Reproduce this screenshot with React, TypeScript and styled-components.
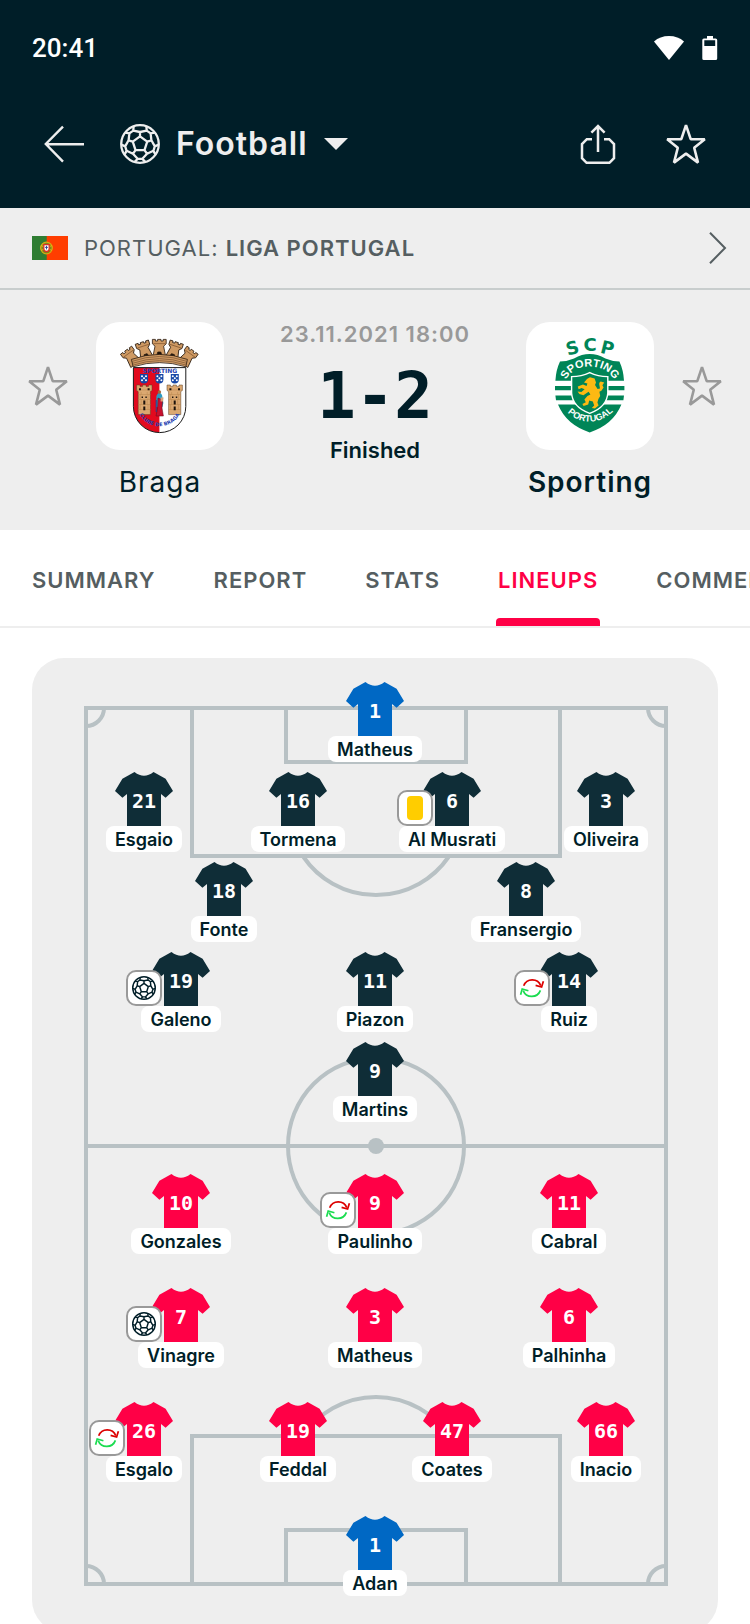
import React from "react";
import styled, { createGlobalStyle } from "styled-components";

const color = {
  navy: "#001e28",
  shirtHome: "#0f2d37",
  shirtAway: "#ff0046",
  shirtKeeper: "#0068c4",
  grey: "#eeeeee",
  line: "#b8c1c4",
  slate: "#555e61",
  muted: "#999999",
  accent: "#ff0046",
};

const GlobalStyle = createGlobalStyle`
  *, *::before, *::after { box-sizing: border-box; }
  body {
    margin: 0;
    background: #ffffff;
    color: ${color.navy};
    font-family: Inter, "Liberation Sans", sans-serif;
  }
  button, select {
    font: inherit;
    color: inherit;
    background: none;
    border: 0;
    padding: 0;
    margin: 0;
    cursor: pointer;
  }
  a { color: inherit; text-decoration: none; }
  svg { display: block; flex: none; }
`;

/* ---------- Shell ---------- */

const Screen = styled.div`
  display: flex;
  flex-direction: column;
  height: 100vh;
  overflow: hidden auto;
  scrollbar-width: none;
`;

const Header = styled.header`
  flex: none;
  padding-bottom: 16px;
  background: ${color.navy};
  color: ${color.grey};
`;

const StatusBar = styled.div`
  display: flex;
  align-items: center;
  gap: 18px;
  height: 96px;
  padding: 0 32px;
  color: #ffffff;
`;

const Clock = styled.time`
  margin-right: auto;
  font: 500 26px/32px Roboto, sans-serif;
`;

const NavBar = styled.div`
  display: flex;
  align-items: center;
  height: 96px;
  padding: 0 44px;
`;

const IconButton = styled.button<{ $tone?: string }>`
  flex: none;
  width: 40px;
  height: 40px;
  color: ${(p) => p.$tone ?? "inherit"};
`;

const SportPicker = styled.label`
  display: flex;
  align-items: center;
  gap: 16px;
  margin: 0 auto 0 36px;
`;

const SportSelect = styled.select`
  appearance: none;
  font-size: 32px;
  font-weight: 600;
  line-height: 40px;
  letter-spacing: 1px;
`;

const NavActions = styled.div`
  display: flex;
  gap: 48px;
`;

/* ---------- League and score ---------- */

const LeagueLink = styled.a`
  display: flex;
  flex: none;
  align-items: center;
  gap: 16px;
  height: 82px;
  padding: 0 22px 0 32px;
  border-bottom: 2px solid #c8cdcd;
  background: ${color.grey};
  color: ${color.slate};
  font-size: 22px;
  line-height: 28px;
  letter-spacing: 1px;
`;

const LeagueName = styled.span`
  flex: 1;
  strong { font-weight: 600; }
`;

const MatchHeader = styled.section`
  display: flex;
  flex: none;
  align-items: flex-start;
  gap: 28px;
  padding: 32px 28px 28px;
  background: ${color.grey};
`;

const FavouriteSlot = styled.div`
  display: flex;
  align-items: center;
  height: 128px;
`;

const Team = styled.div`
  display: flex;
  flex-direction: column;
  align-items: center;
  gap: 12px;
  width: 128px;
`;

const CrestTile = styled.div`
  width: 128px;
  height: 128px;
  border-radius: 24px;
  background: #ffffff;
`;

const TeamName = styled.span<{ $winner?: boolean }>`
  font-size: 28px;
  font-weight: ${(p) => (p.$winner ? 600 : 400)};
  line-height: 40px;
  letter-spacing: 1px;
`;

const ScoreBlock = styled.div`
  display: flex;
  flex: 1;
  flex-direction: column;
  align-items: center;
  white-space: nowrap;
`;

const Kickoff = styled.time`
  color: ${color.muted};
  font-size: 22px;
  font-weight: 600;
  line-height: 24px;
  letter-spacing: 1px;
`;

const Score = styled.strong`
  margin: 18px 0 10px;
  font: 700 64px/64px "DejaVu Sans Mono", monospace;
`;

const MatchState = styled.span`
  font-size: 22px;
  font-weight: 600;
  line-height: 24px;
`;

/* ---------- Tabs ---------- */

const Tabs = styled.nav`
  display: flex;
  flex: none;
  gap: 54px;
  overflow: hidden;
  padding: 0 30px;
  border-bottom: 2px solid ${color.grey};
`;

const Tab = styled.a<{ $active?: boolean }>`
  color: ${(p) => (p.$active ? color.accent : color.slate)};
  font-size: 22px;
  font-weight: 600;
  line-height: 28px;
  letter-spacing: 1px;
  padding: 36px 2px 0;

  &::after {
    content: "";
    display: block;
    height: 8px;
    margin: 24px -2px 0;
    border-radius: 4px 4px 0 0;
    background: ${(p) => (p.$active ? color.accent : "transparent")};
  }
`;

/* ---------- Pitch ---------- */

const PitchCard = styled.section`
  position: relative;
  flex: none;
  margin: 30px 32px 32px;
  padding: 24px 35px 36px;
  border-radius: 32px;
  background: ${color.grey};
`;

const PitchLines = styled.svg`
  position: absolute;
  top: 48px;
  left: 52px;
  width: calc(100% - 102px);
  height: calc(100% - 94px);
`;

const Formation = styled.div<{ $gap: number }>`
  position: relative;
  display: flex;
  flex-direction: column;
  gap: ${(p) => p.$gap}px;

  & + & { margin-top: 52px; }
`;

const rowInset: Record<number, number> = { 2: 6, 3: 17 };

const PlayerRow = styled.div<{ $count: number }>`
  display: grid;
  grid-template-columns: repeat(${(p) => p.$count}, 1fr);
  justify-items: center;
  padding: 0 ${(p) => rowInset[p.$count] ?? 0}px;
`;

const PlayerLink = styled.a`
  display: flex;
  flex-direction: column;
  align-items: center;
`;

const Shirt = styled.span`
  position: relative;
  display: grid;
  width: 58px;
  height: 54px;

  > * { grid-area: 1 / 1; }
`;

const ShirtNumber = styled.span`
  z-index: 1;
  align-self: center;
  justify-self: center;
  padding-top: 4px;
  color: #ffffff;
  font: 700 20px/24px "DejaVu Sans Mono", monospace;
`;

const Badge = styled.span`
  position: absolute;
  z-index: 2;
  top: 18px;
  left: -26px;
  display: grid;
  place-items: center;
  width: 36px;
  height: 36px;
  border: 2px solid ${color.muted};
  border-radius: 10px;
  background: #ffffff;
  color: ${color.navy};
`;

const YellowCard = styled.span`
  width: 16px;
  height: 24px;
  border-radius: 4px;
  background: #ffcd00;
`;

const PlayerName = styled.span`
  padding: 2px 9px 0;
  border-radius: 8px;
  background: #ffffff;
  font-size: 18px;
  font-weight: 600;
  line-height: 24px;
  white-space: nowrap;
`;

/* ---------- Icons ---------- */

const point = (r: number, deg: number) => {
  const a = ((deg - 90) * Math.PI) / 180;
  return `${(20 + r * Math.cos(a)).toFixed(2)} ${(20 + r * Math.sin(a)).toFixed(2)}`;
};

const ballSeams = [0, 72, 144, 216, 288]
  .map(
    (t) =>
      `M${point(7.6, t)}L${point(7.6, t + 72)}` +
      `M${point(7.6, t)}L${point(12, t)}` +
      `M${point(18.6, t - 20)}L${point(15, t - 27)}L${point(12, t)}L${point(15, t + 27)}L${point(18.6, t + 20)}` +
      `M${point(15, t + 27)}L${point(15, t + 45)}`
  )
  .join("");

const BallIcon = ({ size, stroke }: { size: number; stroke: number }) => (
  <svg width={size} height={size} viewBox="0 0 40 40" fill="none" stroke="currentColor" strokeWidth={stroke} strokeLinejoin="round">
    <circle cx="20" cy="20" r="18.8" />
    <path d={ballSeams} />
  </svg>
);

const BackIcon = () => (
  <svg width="40" height="40" viewBox="0 0 40 40" fill="none" stroke="currentColor" strokeWidth="2.4">
    <path d="M19 2.6 1.8 20 19 37.6M1.8 20.3H40" />
  </svg>
);

const ShareIcon = () => (
  <svg width="40" height="40" viewBox="0 0 40 40" fill="none" stroke="currentColor" strokeWidth="2.5">
    <path d="M14 15.2H8.8L4 20v14.2l4.6 4.6h22.8l4.6-4.6V20l-4.8-4.8H26" />
    <path d="M20 28V2.2M13.4 8.6 20 2l6.6 6.6" />
  </svg>
);

const StarIcon = () => (
  <svg width="40" height="40" viewBox="0 0 40 40" fill="none" stroke="currentColor" strokeWidth="2.6" strokeLinejoin="bevel">
    <path d="M20 1.2 24.7 15.2H38.8L28.2 23.8 32 38.6 20 29.6 8 38.6 11.8 23.8 1.2 15.2H15.3Z" />
  </svg>
);

const CaretIcon = () => (
  <svg width="24" height="12" viewBox="0 0 24 12" fill="currentColor">
    <path d="M0 0H24L12 12Z" />
  </svg>
);

const ChevronIcon = () => (
  <svg width="20" height="32" viewBox="0 0 20 32" fill="none" stroke="currentColor" strokeWidth="2">
    <path d="M2 .8 17 16 2 31.2" />
  </svg>
);

const WifiIcon = () => (
  <svg width="30" height="24" viewBox="0 0 30 24" fill="currentColor">
    <path d="M15 24 0 5.4C4 2 9 0 15 0s11 2 15 5.4Z" />
  </svg>
);

const BatteryIcon = () => (
  <svg width="16" height="24" viewBox="0 0 16 24" fill="currentColor">
    <path fillRule="evenodd" d="M5 0h6v2.4h2.6a1.6 1.6 0 0 1 1.6 1.6v18.4a1.6 1.6 0 0 1-1.6 1.6H1.9A1.6 1.6 0 0 1 .3 22.4V4a1.6 1.6 0 0 1 1.6-1.6H5ZM2.3 4.2V10h10.9V4.2Z" />
  </svg>
);

const SwapIcon = () => (
  <svg width="32" height="32" viewBox="2 2 32 32" fill="none" strokeWidth="1.7">
    <g stroke="#dc0000">
      <path d="M9.7 15.8A9.2 9.2 0 0 1 26.8 15.6" />
      <path d="M21.6 15.4 27.6 17 29.4 11.2" />
    </g>
    <g stroke="#1bdc50">
      <path d="M26.4 20.4A9.2 9.2 0 0 1 9.2 20.6" />
      <path d="M14.4 20.8 8.2 19 6.6 24.8" />
    </g>
  </svg>
);

const ShirtShape = ({ fill }: { fill: string }) => (
  <svg width="58" height="54" viewBox="0 0 58 54" fill={fill}>
    <path d="M19.5 0Q29 7.6 38.5 0L50.6 6.8 58 19 50.6 25.8 46 22V54H12V22L7.4 25.8 0 19 7.4 6.8Z" />
  </svg>
);

const PortugalFlag = () => (
  <svg width="36" height="24" viewBox="0 0 36 24" role="img" aria-label="Portugal">
    <path fill="#ff3d00" d="M0 0H36V24H0Z" />
    <path fill="#2f7d32" d="M0 0H14.7V24H0Z" />
    <circle cx="14.5" cy="12" r="5.8" fill="#7a8a1a" stroke="#d9a813" strokeWidth="1.3" />
    <path d="M9 9.5 20 14.5M9 14.5 20 9.5" stroke="#e8bd18" strokeWidth=".8" />
    <path fill="#ffffff" stroke="#dc3226" strokeWidth="1.3" d="M11.8 8.6h5.4v4.2a2.7 2.7 0 0 1-5.4 0Z" />
    <path d="M14.5 9.8v3.6M13.1 11.4h2.8" stroke="#24408e" strokeWidth=".9" />
  </svg>
);

/* ---------- Crests ---------- */

const CrownTower = ({ angle }: { angle: number }) => (
  <g transform={`rotate(${angle} 63.3 74)`} stroke="#2b1c10" strokeWidth=".8">
    <path fill="#cf9a63" d="M56.4 17.4h3v1.6h2.2v-1.6h3.4v1.6h2.2v-1.6h3v4.4l-2.6 2.4 2 10H57l2-10-2.6-2.4Z" />
    <path d="M57.4 21.6h12" stroke="#8a5c33" />
    <path fill="#1c120b" d="M60.4 34.4l1.4-4.4h3l1.4 4.4Z" />
  </g>
);

const CastleTower = ({ x }: { x: number }) => (
  <g transform={`translate(${x} 63)`}>
    <path fill="#dba871" stroke="#5b3c22" strokeWidth=".5" d="M0 0h3.4v1.4H6V0h3.4v1.4H12V0h3.4v5.4l-1.6 1.2V29.6H1.6V6.6L0 5.4Z" />
    <path stroke="#b8864f" strokeWidth=".5" d="M0 5H15.4M1.6 9.5H13.8M1.6 14.5H13.8M1.6 19.5H13.8M1.6 24.5H13.8M4.6 7v2.5M10.6 7v2.5M3.6 9.5v5M11.4 9.5v5M4.6 14.5v5M10.6 14.5v5M3.6 19.5v5M11.4 19.5v5" />
    <path fill="#1c120b" d="M6.7 15.4h2v4h-2ZM6.7 21.4h2V25.2h-2ZM5 11.6h1.4v1.5H5ZM8.8 11.6h1.4v1.5H8.8ZM2.4 3.2h2v2h-2ZM11 3.2h2v2h-2Z" />
  </g>
);

const Quina = ({ x }: { x: number }) => (
  <g transform={`translate(${x} 52)`}>
    <path fill="#1747a6" d="M-4 0H4V5.4A4 4 0 0 1-4 5.4Z" />
    <g fill="#ffffff">
      <circle cx="-2" cy="2.2" r="1" />
      <circle cx="2" cy="2.2" r="1" />
      <circle cx="0" cy="4.3" r="1" />
      <circle cx="-2" cy="6.2" r="1" />
      <circle cx="2" cy="6.2" r="1" />
    </g>
  </g>
);

const BragaCrest = () => (
  <svg width="128" height="128" viewBox="0 0 128 128" role="img" aria-label="Braga crest">
    {[-36, 36, -18, 18, 0].map((a) => (
      <CrownTower key={a} angle={a} />
    ))}
    <path fill="#cf9a63" stroke="#2b1c10" strokeWidth=".8" d="M35.4 37.4Q63.3 27.4 91.4 37.4L89.8 44.8Q63.3 36.4 37.2 44.8Z" />
    <path fill="none" stroke="#7a5230" strokeWidth=".7" d="M36 39.4Q63.3 29.6 90.8 39.4M36.6 41.3Q63.3 32 90.4 41.3M37 43.1Q63.3 34.2 90.2 43.1" />
    <path fill="#ffffff" d="M37.4 45.6H89.8V84.4A26.2 26.2 0 0 1 37.4 84.4Z" />
    <path fill="#e20a1e" d="M37.4 45.6H63.4V110.6A26.2 26.2 0 0 1 37.4 84.4Z" />
    <path fill="none" stroke="#1c1c1c" strokeWidth="1" d="M37.4 45.6H89.8V84.4A26.2 26.2 0 0 1 37.4 84.4Z" />
    <text x="64" y="51" textAnchor="middle" fill="#2440b0" fontFamily="DejaVu Sans" fontWeight="700" fontSize="6">
      SPORTING
    </text>
    <Quina x={48} />
    <Quina x={63.4} />
    <Quina x={78.8} />
    <CastleTower x={40.6} />
    <CastleTower x={71} />
    <path fill="#2a9bc4" d="M60.4 74q2.6-6 5.6-1l1.4 8-1 4H60Z" />
    <path fill="#c8102e" stroke="#5c0a18" strokeWidth=".5" d="M62 76 66.6 78 66 86 67.4 94H60L61.6 86Z" />
    <path fill="#d8a27a" d="M64.6 75.4h3l-.6 4h-2.4Z" />
    <circle cx="63.4" cy="70" r="1.7" fill="#a5673a" />
    <path stroke="#24408e" strokeWidth="1" d="M60.2 78V90" />
    <path id="braga-motto" fill="none" d="M41.6 88A23 23 0 0 0 85.6 88" />
    <text fill="#2440b0" fontFamily="DejaVu Sans" fontWeight="700" fontSize="5">
      <textPath href="#braga-motto" startOffset="50%" textAnchor="middle">
        CLUBE DE BRAGA
      </textPath>
    </text>
  </svg>
);

const SportingCrest = () => (
  <svg width="128" height="128" viewBox="0 0 128 128" role="img" aria-label="Sporting crest">
    <g fill="#008557" fontFamily="DejaVu Sans" fontWeight="700" fontSize="18" textAnchor="middle">
      <text transform="translate(48 32) rotate(-15)">S</text>
      <text transform="translate(64 29)">C</text>
      <text transform="translate(80 32) rotate(14)">P</text>
    </g>
    <path fill="#008557" d="M34 39.6Q42 39 48 36.4 63.7 27.6 79.4 36.4 85.4 39 93.4 39.6 97.4 48 98 58.8H29.4Q30 48 34 39.6Z" />
    <path fill="#008557" d="M29 64H98.4V68.2H29ZM29.4 73.6H98L97.4 78.2H30ZM32 82.6H95.4Q87 103 63.7 110.4 40.4 103 32 82.6Z" />
    <path fill="#008557" stroke="#ffffff" strokeWidth="1.4" d="M45.6 54.6Q55.6 54.6 63.7 50.6 71.8 54.6 81.8 54.6V71Q81 85 63.7 91.4 46.4 85 45.6 71Z" />
    <path
      fill="#fdb913"
      d="M61 57 64 55.2 68.6 56.4 70 60.4 69 63 71.6 67 74 66.4 73.4 63.2Q72.6 60.4 74.8 59.4L78.2 60.6 76.4 63.2 77.6 65.6 75.4 68.8 73.4 69.8 74.2 74 72.4 77 71.4 80.4 72.6 83.4 69 86.4 65.8 86 68.2 83.4 66.8 79.6 63.2 78.6 62.2 82.4 57.6 84 56.4 82 59.8 80.2 58.4 77.6 61.4 74 64.4 72.6 62.6 69.8 57.4 73.2 53.4 72 51.6 69.4 55.4 70 58.6 67.2 55.6 66 52.6 67.2 51.8 64.4 57 62.6 60.6 64 61.4 61.6 58 60.4Z"
    />
    <path id="sporting-arc" fill="none" d="M39.6 58.6Q46 45 63.7 44.4 81.6 45 88.6 58.6" />
    <path id="portugal-arc" fill="none" d="M38.4 87Q49 99.6 63.7 99.6 78.4 99.6 90.4 86" />
    <g fill="#ffffff" fontFamily="Liberation Sans" fontWeight="700">
      <text fontSize="11">
        <textPath href="#sporting-arc" startOffset="50%" textAnchor="middle">
          SPORTING
        </textPath>
      </text>
      <text fontSize="9">
        <textPath href="#portugal-arc" startOffset="50%" textAnchor="middle">
          PORTUGAL
        </textPath>
      </text>
    </g>
  </svg>
);

/* ---------- Data ---------- */

type Event = "goal" | "yellow" | "swap";
type Player = { no: number; name: string; event?: Event };

const home: Player[][] = [
  [{ no: 1, name: "Matheus" }],
  [
    { no: 21, name: "Esgaio" },
    { no: 16, name: "Tormena" },
    { no: 6, name: "Al Musrati", event: "yellow" },
    { no: 3, name: "Oliveira" },
  ],
  [
    { no: 18, name: "Fonte" },
    { no: 8, name: "Fransergio" },
  ],
  [
    { no: 19, name: "Galeno", event: "goal" },
    { no: 11, name: "Piazon" },
    { no: 14, name: "Ruiz", event: "swap" },
  ],
  [{ no: 9, name: "Martins" }],
];

const away: Player[][] = [
  [
    { no: 10, name: "Gonzales" },
    { no: 9, name: "Paulinho", event: "swap" },
    { no: 11, name: "Cabral" },
  ],
  [
    { no: 7, name: "Vinagre", event: "goal" },
    { no: 3, name: "Matheus" },
    { no: 6, name: "Palhinha" },
  ],
  [
    { no: 26, name: "Esgalo", event: "swap" },
    { no: 19, name: "Feddal" },
    { no: 47, name: "Coates" },
    { no: 66, name: "Inacio" },
  ],
  [{ no: 1, name: "Adan" }],
];

const tabs = ["SUMMARY", "REPORT", "STATS", "LINEUPS", "COMMENTARY"];

const eventMark: Record<Event, React.ReactNode> = {
  goal: <BallIcon size={24} stroke={2.4} />,
  yellow: <YellowCard />,
  swap: <SwapIcon />,
};

const Lines = ({ rows, shirt, gap }: { rows: Player[][]; shirt: string; gap: number }) => (
  <Formation $gap={gap}>
    {rows.map((row, i) => (
      <PlayerRow key={i} $count={row.length}>
        {row.map((p) => (
          <PlayerLink key={p.name} href="#player">
            <Shirt>
              <ShirtShape fill={p.no === 1 ? color.shirtKeeper : shirt} />
              <ShirtNumber>{p.no}</ShirtNumber>
              {p.event && <Badge>{eventMark[p.event]}</Badge>}
            </Shirt>
            <PlayerName>{p.name}</PlayerName>
          </PlayerLink>
        ))}
      </PlayerRow>
    ))}
  </Formation>
);

export default function App() {
  return (
    <Screen>
      <GlobalStyle />
      <Header>
        <StatusBar>
          <Clock>20:41</Clock>
          <WifiIcon />
          <BatteryIcon />
        </StatusBar>
        <NavBar>
          <IconButton aria-label="Back">
            <BackIcon />
          </IconButton>
          <SportPicker>
            <BallIcon size={40} stroke={2.3} />
            <SportSelect aria-label="Sport" defaultValue="Football">
              <option>Football</option>
            </SportSelect>
            <CaretIcon />
          </SportPicker>
          <NavActions>
            <IconButton aria-label="Share">
              <ShareIcon />
            </IconButton>
            <IconButton aria-label="Add match to favourites">
              <StarIcon />
            </IconButton>
          </NavActions>
        </NavBar>
      </Header>

      <LeagueLink href="#league">
        <PortugalFlag />
        <LeagueName>
          PORTUGAL: <strong>LIGA PORTUGAL</strong>
        </LeagueName>
        <ChevronIcon />
      </LeagueLink>

      <MatchHeader>
        <FavouriteSlot>
          <IconButton $tone={color.muted} aria-label="Add Braga to favourites">
            <StarIcon />
          </IconButton>
        </FavouriteSlot>
        <Team>
          <CrestTile>
            <BragaCrest />
          </CrestTile>
          <TeamName>Braga</TeamName>
        </Team>
        <ScoreBlock>
          <Kickoff>23.11.2021 18:00</Kickoff>
          <Score>1-2</Score>
          <MatchState>Finished</MatchState>
        </ScoreBlock>
        <Team>
          <CrestTile>
            <SportingCrest />
          </CrestTile>
          <TeamName $winner>Sporting</TeamName>
        </Team>
        <FavouriteSlot>
          <IconButton $tone={color.muted} aria-label="Add Sporting to favourites">
            <StarIcon />
          </IconButton>
        </FavouriteSlot>
      </MatchHeader>

      <Tabs>
        {tabs.map((t) => (
          <Tab key={t} href={`#${t.toLowerCase()}`} $active={t === "LINEUPS"}>
            {t}
          </Tab>
        ))}
      </Tabs>

      <PitchCard>
        <PitchLines viewBox="0 0 584 880" preserveAspectRatio="none" fill="none" stroke={color.line} strokeWidth="4">
          <path d="M2 2H582V878H2ZM2 440H582" />
          <path d="M108 2V150H476V2M202 2V56H382V2" />
          <path d="M108 878V730H476V878M202 878V824H382V878" />
          <circle cx="292" cy="440" r="88" />
          <circle cx="292" cy="440" r="8" fill={color.line} stroke="none" />
          <path d="M219.5 151A88 88 0 0 0 364.5 151M219.5 729A88 88 0 0 1 364.5 729" />
          <path d="M20 2A18 18 0 0 1 2 20M564 2A18 18 0 0 0 582 20M2 860A18 18 0 0 1 20 878M582 860A18 18 0 0 0 564 878" />
        </PitchLines>
        <Lines rows={home} shirt={color.shirtHome} gap={10} />
        <Lines rows={away} shirt={color.shirtAway} gap={34} />
      </PitchCard>
    </Screen>
  );
}
